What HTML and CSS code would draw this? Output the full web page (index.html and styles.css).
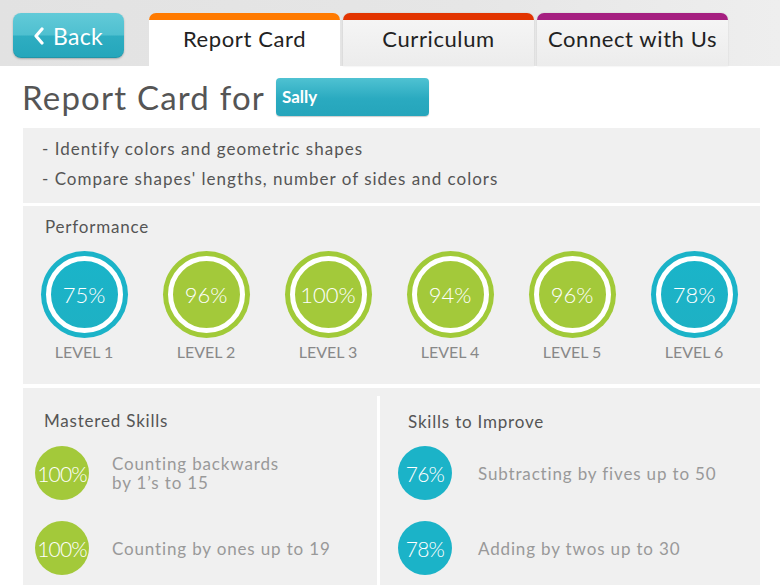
FILE: index.html
```html
<!DOCTYPE html>
<html lang="en">
<head>
<meta charset="utf-8">
<title>Report Card</title>
<link rel="stylesheet" href="styles.css">
</head>
<body>
<header class="topbar">
  <a class="back-btn" href="#">
    <svg class="chev" width="12" height="18" viewBox="0 0 12 18"><path d="M9 2 L3 9 L9 16" fill="none" stroke="#fff" stroke-width="3.2" stroke-linecap="round" stroke-linejoin="round"/></svg>
    <span>Back</span>
  </a>
  <nav class="tabs">
    <div class="tab tab-active tab-orange">Report Card</div>
    <div class="tab tab-red">Curriculum</div>
    <div class="tab tab-purple">Connect with Us</div>
  </nav>
</header>
<main class="content">
  <div class="title-row">
    <h1 class="title">Report Card for</h1>
    <div class="select">Sally</div>
  </div>
  <section class="panel goals">
    <p>- Identify colors and geometric shapes</p>
    <p>- Compare shapes' lengths, number of sides and colors</p>
  </section>
  <section class="panel perf">
    <h2 class="perf-title">Performance</h2>
    <div class="levels">
      <div class="level"><div class="ring ring-teal"><span>75%</span></div><div class="level-name">LEVEL 1</div></div>
      <div class="level"><div class="ring ring-green"><span>96%</span></div><div class="level-name">LEVEL 2</div></div>
      <div class="level"><div class="ring ring-green"><span>100%</span></div><div class="level-name">LEVEL 3</div></div>
      <div class="level"><div class="ring ring-green"><span>94%</span></div><div class="level-name">LEVEL 4</div></div>
      <div class="level"><div class="ring ring-green"><span>96%</span></div><div class="level-name">LEVEL 5</div></div>
      <div class="level"><div class="ring ring-teal"><span>78%</span></div><div class="level-name">LEVEL 6</div></div>
    </div>
  </section>
  <section class="panel skills">
    <div class="skill-col col-left">
      <h2 class="skill-title">Mastered Skills</h2>
      <div class="skill"><div class="dot dot-green">100%</div><div class="skill-text">Counting backwards<br>by 1’s to 15</div></div>
      <div class="skill"><div class="dot dot-green">100%</div><div class="skill-text">Counting by ones up to 19</div></div>
    </div>
    <div class="skill-col col-right">
      <h2 class="skill-title">Skills to Improve</h2>
      <div class="skill"><div class="dot dot-teal">76%</div><div class="skill-text">Subtracting by fives up to 50</div></div>
      <div class="skill"><div class="dot dot-teal">78%</div><div class="skill-text">Adding by twos up to 30</div></div>
    </div>
  </section>
</main>
</body>
</html>
```
FILE: styles.css
```css
* { box-sizing: border-box; }
html, body { margin: 0; padding: 0; }
body {
  width: 780px;
  height: 585px;
  overflow: hidden;
  background: #fff;
  font-family: "Lato", "Noto Sans", sans-serif;
  color: #444;
}
h1, h2, p { margin: 0; font-weight: normal; }

.topbar {
  height: 66px;
  display: flex;
  align-items: flex-start;
  padding: 13px 0 0 13px;
  background: linear-gradient(to right, #e2e2e2, #e6e6e6 60%, #eeeeee);
}
.back-btn {
  width: 111px;
  height: 45px;
  border-radius: 8px;
  display: flex;
  align-items: center;
  gap: 8px;
  padding-left: 20px;
  color: #fff;
  text-decoration: none;
  font-size: 23px;
  letter-spacing: 0.3px;
  background: linear-gradient(to bottom, #62cad8 0%, #4fc0d0 48%, #2eadc1 52%, #25a6bb 100%);
  box-shadow: 0 1px 2px rgba(0,0,0,0.25), inset 0 -1px 0 rgba(0,0,0,0.1);
}
.chev { display: block; }
.tabs {
  display: flex;
  gap: 3px;
  margin-left: 25px;
}
.tab {
  width: 191px;
  height: 53px;
  border-radius: 7px 7px 0 0;
  border-top: 7px solid #f57800;
  background: linear-gradient(to bottom, #f5f5f5, #ececec);
  box-shadow: 0 0 2px rgba(0,0,0,0.12);
  color: #222;
  font-size: 22px;
  letter-spacing: 0.6px;
  text-align: center;
  line-height: 38px;
}
.tab-active { background: #fff; box-shadow: none; }
.tab-orange { border-top-color: #ff7a00; }
.tab-red { border-top-color: #e23400; }
.tab-purple { border-top-color: #a51f80; }

.content { padding: 12px 20px 0 23px; }
.title-row {
  display: flex;
  align-items: center;
  height: 38px;
  margin-bottom: 12px;
}
.title {
  font-size: 33px;
  color: #555;
  margin-left: -1px;
  letter-spacing: 1.2px;
}
.select {
  margin-left: 11px;
  width: 153px;
  height: 38px;
  border-radius: 4px;
  background: linear-gradient(to bottom, #4fc2d2, #2aaac0 55%, #25a5bb);
  box-shadow: 0 1px 1px rgba(0,0,0,0.2);
  color: #fff;
  font-size: 17px;
  font-weight: bold;
  line-height: 38px;
  padding-left: 6px;
}

.panel { background: #f0f0f0; }
.goals {
  height: 75px;
  padding: 6px 0 0 19px;
  margin-bottom: 3px;
}
.goals p { font-size: 17px; line-height: 30px; color: #555; letter-spacing: 1px; }

.perf {
  height: 178px;
  padding: 10px 0 0 0;
  margin-bottom: 4px;
}
.perf-title {
  font-size: 17px;
  line-height: 22px;
  color: #555;
  padding-left: 22px;
  letter-spacing: 0.8px;
}
.levels {
  display: grid;
  grid-template-columns: repeat(6, 122px);
  margin-top: 13px;
}
.level { display: flex; flex-direction: column; align-items: center; }
.ring {
  width: 87px;
  height: 87px;
  border-radius: 50%;
  padding: 5px;
  display: flex;
}
.ring span {
  flex: 1;
  border-radius: 50%;
  border: 5px solid #fff;
  display: flex;
  align-items: center;
  justify-content: center;
  color: #fff;
  font-size: 22px;
  font-weight: 300;
}
.ring-teal { background: #1bb3c8; }
.ring-teal span { background: linear-gradient(to bottom, #1ab4c9, #1eb1c4); }
.ring-green { background: #a1ca38; }
.ring-green span { background: #a3c93a; }
.level-name {
  margin-top: 5px;
  font-size: 16px;
  line-height: 18px;
  color: #888;
}

.skills {
  height: 200px;
  display: flex;
}
.skill-col { display: flex; flex-direction: column; }
.col-left { width: 354px; padding: 22px 0 0 12px; }
.col-right {
  flex: 1;
  margin-top: 8px;
  border-left: 3px solid #fff;
  padding: 15px 0 0 18px;
}
.skill-title {
  font-size: 17px;
  line-height: 22px;
  color: #555;
  margin-bottom: 14px;
  letter-spacing: 0.8px;
}
.col-left .skill-title { padding-left: 9px; }
.col-right .skill-title { padding-left: 10px; margin-bottom: 13px; }
.skill {
  display: flex;
  align-items: center;
  height: 54px;
  margin-bottom: 21px;
}
.dot {
  width: 54px;
  height: 54px;
  flex: none;
  border-radius: 50%;
  color: #fff;
  font-size: 21px;
  font-weight: 300;
  display: flex;
  align-items: center;
  justify-content: center;
  letter-spacing: -0.8px;
}
.dot-green { background: #a3c93a; }
.dot-teal { background: #1bb3c8; }
.skill-text {
  font-size: 17px;
  line-height: 19px;
  color: #999;
  letter-spacing: 0.85px;
}
.col-left .skill-text { margin-left: 23px; }
.col-right .skill-text { margin-left: 26px; }
```
